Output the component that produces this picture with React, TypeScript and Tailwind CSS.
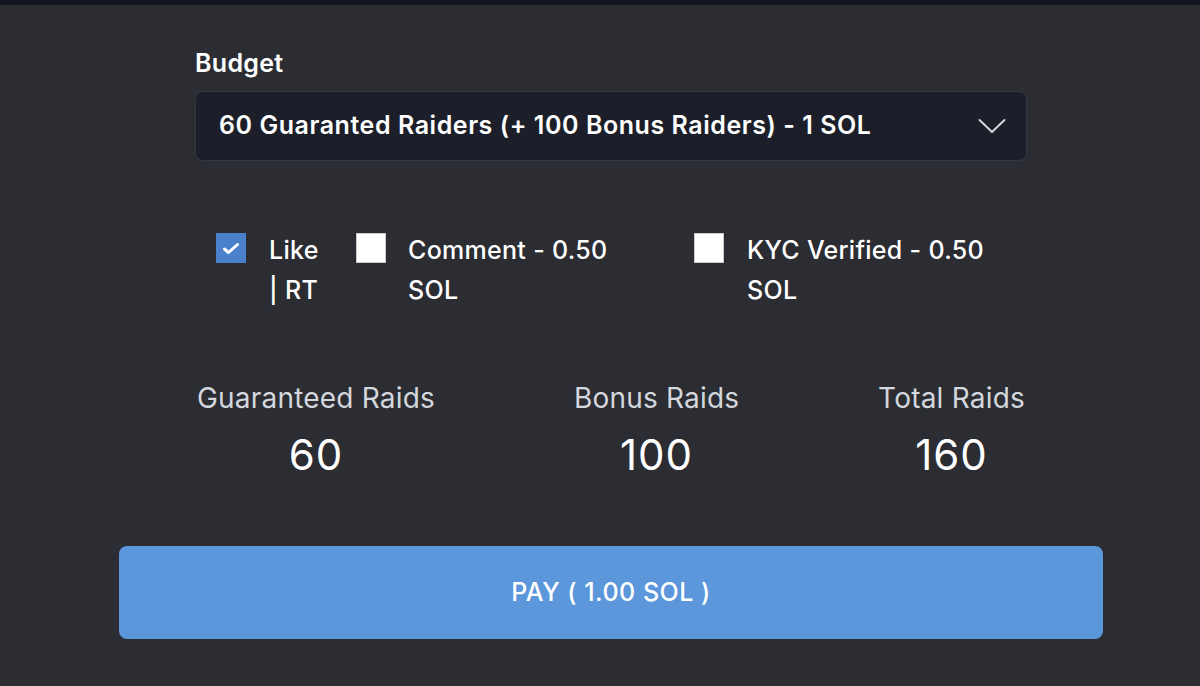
import React from "react";

export default function App() {
  return (
    <div className="w-[1200px] h-[686px] bg-[#2b2d33] overflow-hidden flex flex-col" style={{ fontFamily: "Inter, 'Noto Sans', sans-serif" }}>
      <div className="h-[5px] bg-[#121621] shrink-0" />
      <div className="flex flex-col pl-[119px] pr-[97px]">
        <div className="px-[76px] flex flex-col">
          <div className="mt-[43px] text-[25px] leading-[30px] font-semibold text-white tracking-[0.3px]">Budget</div>
          <div className="mt-[13px] h-[70px] rounded-[8px] bg-[#1c1f29] border border-[#343846] flex items-center justify-between pl-[23px] pr-[20px]">
            <span className="text-[25px] font-semibold text-white tracking-[0.55px]">60 Guaranted Raiders (+ 100 Bonus Raiders) - 1 SOL</span>
            <svg width="28" height="16" viewBox="0 0 28 16" fill="none" stroke="#d1d5db" strokeWidth="2" strokeLinecap="round" strokeLinejoin="round">
              <path d="M1.5 2 L14 14 L26.5 2" />
            </svg>
          </div>
          <div className="mt-[69px] pl-[21px] flex items-start">
            <div className="w-[140px] flex items-start">
              <div className="w-[30px] h-[30px] mt-[3px] bg-[#4a80cc] flex items-center justify-center shrink-0">
                <svg width="18" height="13" viewBox="0 0 18 13" fill="none" stroke="white" strokeWidth="3" strokeLinecap="round" strokeLinejoin="round">
                  <path d="M2.5 7 L6.5 10.5 L15.5 2.5" />
                </svg>
              </div>
              <div className="ml-[23px] w-[56px] text-[25px] leading-[40px] font-medium text-white tracking-[0.3px]">Like | RT</div>
            </div>
            <div className="w-[338px] flex items-start">
              <div className="w-[30px] h-[30px] mt-[3px] bg-white border border-[#c9ccd2] shrink-0" />
              <div className="ml-[22px] w-[230px] text-[25px] leading-[40px] font-medium text-white tracking-[0.3px]">Comment - 0.50 SOL</div>
            </div>
            <div className="flex items-start">
              <div className="w-[30px] h-[30px] mt-[3px] bg-white border border-[#c9ccd2] shrink-0" />
              <div className="ml-[23px] w-[260px] text-[25px] leading-[40px] font-medium text-white tracking-[0.3px]">KYC Verified - 0.50 SOL</div>
            </div>
          </div>
          <div className="mt-[70px] px-[2px] flex justify-between">
            <div className="flex flex-col items-center">
              <div className="text-[28px] leading-[36px] text-[#d4d7dd] tracking-[0.2px]">Guaranteed Raids</div>
              <div className="mt-[14px] text-[42px] leading-[50px] text-white tracking-[1px]">60</div>
            </div>
            <div className="flex flex-col items-center">
              <div className="text-[28px] leading-[36px] text-[#d4d7dd] tracking-[0.2px]">Bonus Raids</div>
              <div className="mt-[14px] text-[42px] leading-[50px] text-white tracking-[1px]">100</div>
            </div>
            <div className="flex flex-col items-center">
              <div className="text-[28px] leading-[36px] text-[#d4d7dd] tracking-[0.2px]">Total Raids</div>
              <div className="mt-[14px] text-[42px] leading-[50px] text-white tracking-[1px]">160</div>
            </div>
          </div>
        </div>
        <button className="mt-[66px] h-[93px] w-full rounded-[8px] bg-[#5b97da] text-white text-[25px] font-medium tracking-[0.5px] flex items-center justify-center">
          PAY ( 1.00 SOL )
        </button>
      </div>
    </div>
  );
}
